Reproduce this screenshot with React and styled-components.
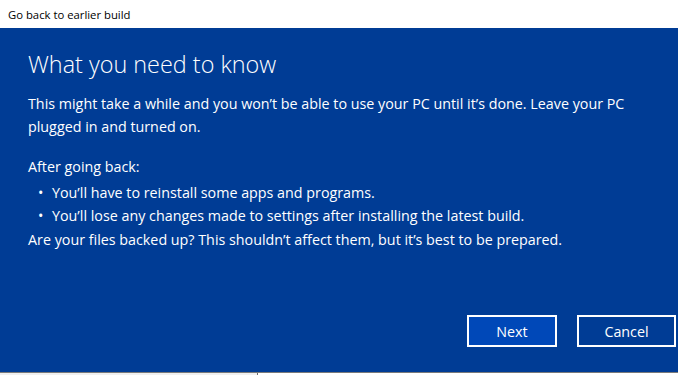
import React from "react";
import styled, { createGlobalStyle } from "styled-components";

const Global = createGlobalStyle`
  html, body { margin: 0; padding: 0; background: #ffffff; }
  body { font-family: "Open Sans", "Noto Sans", sans-serif; }
`;

const Window = styled.div`
  width: 678px;
  height: 375px;
  display: flex;
  flex-direction: column;
  overflow: hidden;
`;

const TitleBar = styled.div`
  height: 28px;
  flex: none;
  display: flex;
  align-items: center;
  padding-left: 8px;
  font-size: 11.3px;
  color: #000;
  background: #fff;
`;

const Panel = styled.div`
  height: 344px;
  flex: none;
  background: #003c95;
  color: #fff;
  padding: 0 28px;
  box-sizing: border-box;
  display: flex;
  flex-direction: column;
`;

const Heading = styled.h1`
  margin: 22px 0 0;
  font-size: 23.4px;
  font-weight: 300;
  line-height: 28px;
`;

const Para = styled.p`
  margin: ${(p) => p.$top || 0}px 0 0;
  font-size: 14.3px;
  line-height: 23px;
`;

const List = styled.ul`
  margin: 3px 0 0;
  padding: 0 0 0 24px;
  list-style: none;
`;

const Item = styled.li`
  font-size: 14.3px;
  line-height: 23px;
  position: relative;
  &::before {
    content: "•";
    position: absolute;
    left: -14px;
  }
`;

const Footer = styled.div`
  margin-top: auto;
  margin-bottom: 25px;
  display: flex;
  justify-content: flex-end;
  gap: 20px;
  margin-right: -26px;
`;

const Button = styled.button`
  height: 32px;
  width: ${(p) => p.$w}px;
  box-sizing: border-box;
  border: 2px solid #fff;
  background: ${(p) => (p.$primary ? "#0048b8" : "#003c95")};
  color: #fff;
  font-family: inherit;
  font-size: 14.3px;
  padding: 0;
`;

const BottomEdge = styled.div`
  flex: none;
  height: 3px;
  display: flex;
  border-top: 1px solid #7a7a7a;
  box-sizing: border-box;
`;

const EdgeLeft = styled.div`
  width: 257px;
  background: #f0f0f0;
  border-right: 1px solid #6d6d6d;
`;

const EdgeRight = styled.div`
  flex: 1;
  background: #ffffff;
`;

export default function App() {
  return (
    <Window>
      <Global />
      <TitleBar>Go back to earlier build</TitleBar>
      <Panel>
        <Heading>What you need to know</Heading>
        <Para $top={14}>
          This might take a while and you won’t be able to use your PC until it’s done. Leave your PC
          plugged in and turned on.
        </Para>
        <Para $top={17}>After going back:</Para>
        <List>
          <Item>You’ll have to reinstall some apps and programs.</Item>
          <Item>You’ll lose any changes made to settings after installing the latest build.</Item>
        </List>
        <Para $top={1}>Are your files backed up? This shouldn’t affect them, but it’s best to be prepared.</Para>
        <Footer>
          <Button $primary $w={90}>Next</Button>
          <Button $w={99}>Cancel</Button>
        </Footer>
      </Panel>
      <BottomEdge>
        <EdgeLeft />
        <EdgeRight />
      </BottomEdge>
    </Window>
  );
}
